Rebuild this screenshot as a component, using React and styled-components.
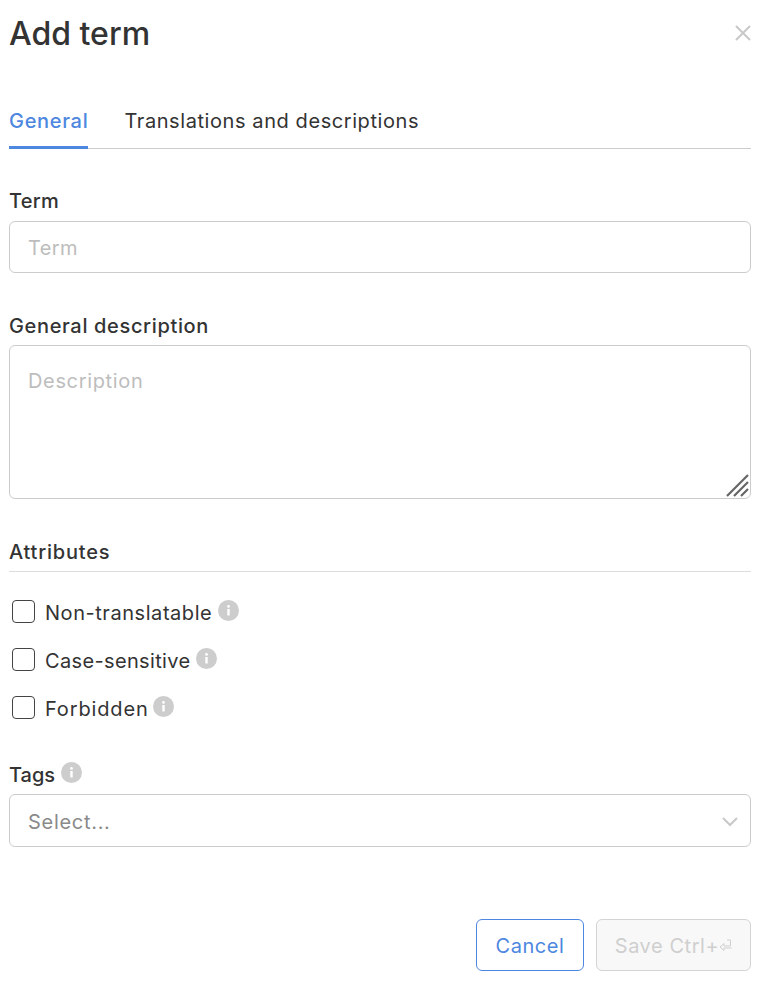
import React from 'react';
import styled, { createGlobalStyle } from 'styled-components';

const Global = createGlobalStyle`
  html, body { margin: 0; padding: 0; background: #fff; }
  body { font-family: Inter, "Liberation Sans", sans-serif; color: #333; }
  * { box-sizing: border-box; }
`;
const Page = styled.div`
  width: 761px; height: 982px; padding: 0 10px 0 9px; overflow: hidden;
  display: flex; flex-direction: column;
`;
const Header = styled.header`
  display: flex; justify-content: space-between; align-items: center;
  height: 68px;
`;
const Title = styled.h1`
  margin: 0; font-size: 32px; line-height: 68px; font-weight: 500; color: #333;
`;
const Close = styled.button`
  border: 0; background: none; padding: 0; width: 16px; height: 16px; margin-bottom: 2px;
  display: flex; color: #c8c8c8;
`;
const Tabs = styled.nav`
  display: flex; gap: 36px; margin-top: 32px; height: 49px; border-bottom: 1px solid #ccc;
`;
const Tab = styled.div`
  height: 49px; font-size: 20px; line-height: 43px;
  letter-spacing: ${p => p.$active ? '0.7px' : '0.58px'};
  font-weight: ${p => p.$active ? 500 : 400};
  color: ${p => p.$active ? '#4d87e0' : '#333'};
  border-bottom: ${p => p.$active ? '3px solid #4d87e0' : '0'};
`;
const Field = styled.section`
  display: flex; flex-direction: column; margin-top: ${p => p.$top}px;
`;
const Label = styled.label`
  display: flex; align-items: center;
  font-size: 20px; line-height: 24px; font-weight: 500; color: #333;
  letter-spacing: ${p => p.$ls || 0}px; margin-bottom: ${p => p.$gap}px;
`;
const TextInput = styled.input`
  width: 100%; height: 52px; border: 1px solid #ccc; border-radius: 6px; padding: 2px 18px 0;
  font: 400 20px Inter, sans-serif; letter-spacing: 0.4px; background: #fff; outline: none;
  &::placeholder { color: #bdbdbd; opacity: 1; }
`;
const AreaWrap = styled.div`
  position: relative; height: 154px; display: flex;
`;
const Area = styled.textarea`
  flex: 1; border: 1px solid #ccc; border-radius: 6px; padding: 22px 18px; resize: none;
  font: 400 20px/26px Inter, sans-serif; letter-spacing: 0.65px; outline: none;
  &::placeholder { color: #bdbdbd; opacity: 1; }
`;
const Grip = styled.svg`
  position: absolute; right: 2px; bottom: 2px; width: 23px; height: 23px;
`;
const SectionTitle = styled.h2`
  margin: 0; height: 32px; font-size: 20px; line-height: 24px; font-weight: 500; color: #333;
  letter-spacing: 0.8px; border-bottom: 1px solid #ddd;
`;
const Checks = styled.div`
  display: flex; flex-direction: column; gap: 24px; margin-top: 29px; padding-left: 3px;
`;
const CheckRow = styled.label`
  display: flex; align-items: center; height: 24px; font-size: 20px; color: #333;
  letter-spacing: ${p => p.$ls}px;
`;
const Box = styled.input.attrs({ type: 'checkbox' })`
  appearance: none; margin: -4px 10px 0 0; width: 23px; height: 23px; background: #fff;
  border: 1.5px solid #444; border-radius: 4px; flex: none;
`;
const Info = styled.svg`
  width: 21px; height: 21px; margin-left: ${p => p.$ml}px; margin-top: -5px; flex: none;
`;
const SelectBox = styled.div`
  height: 53px; border: 1px solid #ccc; border-radius: 6px; padding: 2px 12px 0 18px;
  display: flex; align-items: center; justify-content: space-between;
  font-size: 20px; letter-spacing: 0.7px; color: #8a8a8a;
`;
const Footer = styled.footer`
  display: flex; justify-content: flex-end; gap: 12px; margin-top: 72px;
`;
const Button = styled.button`
  height: 52px; border-radius: 6px; font: 400 20px Inter, sans-serif; padding: 2px 0 0;
  letter-spacing: 0.55px; width: ${p => p.$w}px;
  display: flex; align-items: center; justify-content: center;
  ${p => p.disabled
    ? 'background:#f8f8f8;border:1px solid #d4d4d4;color:#cfcfcf;'
    : 'background:#fff;border:1px solid #4d87e0;color:#4d87e0;'}
`;
const EnterIcon = styled.svg`
  width: 13px; height: 12px; margin-top: -2px; flex: none;
`;

const InfoIcon = ({ ml = 6 }) => (
  <Info $ml={ml} viewBox="0 0 21 21" aria-hidden="true">
    <circle cx="10.5" cy="10.5" r="10.5" fill="#cdcdcd" />
    <rect x="9.3" y="9" width="2.4" height="6.5" fill="#fff" />
    <circle cx="10.5" cy="6.4" r="1.4" fill="#fff" />
  </Info>
);

export default function App() {
  return (
    <Page>
      <Global />
      <Header>
        <Title>Add term</Title>
        <Close aria-label="Close">
          <svg width="16" height="16" viewBox="0 0 16 16"><path d="M1 1l14 14M15 1L1 15" stroke="currentColor" strokeWidth="2" fill="none" /></svg>
        </Close>
      </Header>
      <Tabs>
        <Tab $active>General</Tab>
        <Tab>Translations and descriptions</Tab>
      </Tabs>
      <Field $top={40}>
        <Label $gap={8} $ls={0.25}>Term</Label>
        <TextInput placeholder="Term" />
      </Field>
      <Field $top={41}>
        <Label $gap={7} $ls={0.65}>General description</Label>
        <AreaWrap>
          <Area placeholder="Description" />
          <Grip viewBox="0 0 23 23" aria-hidden="true">
            <path d="M1 22L22 1M8 22L22 8M15 22l7-7" stroke="#666" strokeWidth="2.2" fill="none" />
          </Grip>
        </AreaWrap>
      </Field>
      <Field $top={41}>
        <SectionTitle>Attributes</SectionTitle>
        <Checks>
          <CheckRow $ls={0.55}><Box />Non-translatable<InfoIcon ml={6} /></CheckRow>
          <CheckRow $ls={0.35}><Box />Case-sensitive<InfoIcon ml={5} /></CheckRow>
          <CheckRow $ls={0.85}><Box />Forbidden<InfoIcon ml={4} /></CheckRow>
        </Checks>
      </Field>
      <Field $top={42}>
        <Label $gap={7}>Tags<InfoIcon ml={6} /></Label>
        <SelectBox>
          Select...
          <svg width="16" height="10" viewBox="0 0 16 10"><path d="M1 1l7 7 7-7" stroke="#c8c8c8" strokeWidth="2" fill="none" /></svg>
        </SelectBox>
      </Field>
      <Footer>
        <Button $w={108}>Cancel</Button>
        <Button $w={155} disabled>
          Save Ctrl+
          <EnterIcon viewBox="0 0 13 12" aria-hidden="true">
            <path d="M8 1h3.5v6H5V4.5L1 8l4 3.5V9h7.5" stroke="currentColor" strokeWidth="1" fill="none" />
          </EnterIcon>
        </Button>
      </Footer>
    </Page>
  );
}
